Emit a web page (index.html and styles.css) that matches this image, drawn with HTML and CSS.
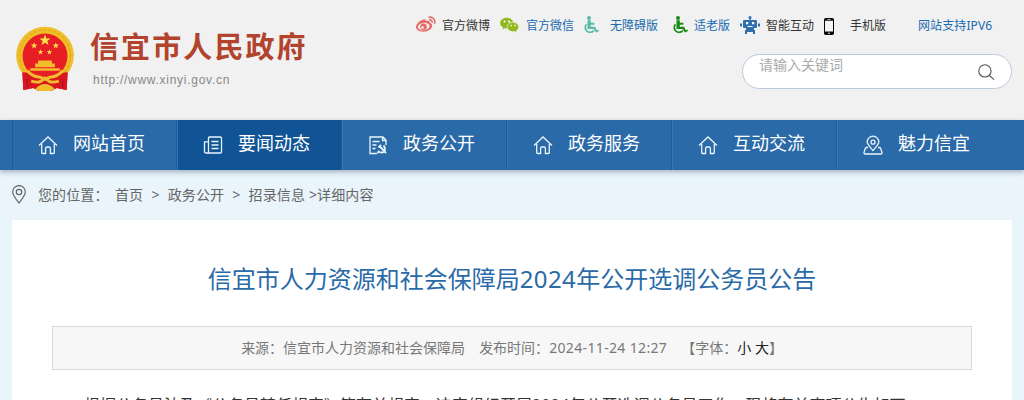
FILE: index.html
```html
<!DOCTYPE html>
<html lang="zh-CN">
<head>
<meta charset="utf-8">
<title>信宜市人民政府</title>
<link rel="stylesheet" href="styles.css">
</head>
<body>
<svg class="defs" width="0" height="0">
  <symbol id="home" viewBox="0 0 20 20"><path d="M1 10.500 10 2l9 8.500M3.700 9v8.600q0 .9.900.9h3v-5.200q0-1.300 1.300-1.300h2.200q1.300 0 1.300 1.300v5.200h3q.9 0 .9-.9V9"/></symbol>
  <symbol id="star" viewBox="-10 -10 20 20"><path d="M0-10 2.400-3.200 9.500-3.100 3.800 1.200 5.900 8.100 0 4-5.900 8.100-3.800 1.200-9.500-3.100-2.400-3.200z"/></symbol>
  <symbol id="wheelchair" viewBox="0 0 16 18"><circle cx="6" cy="2" r="2"/><path d="M4.500 4.300h3.300v2.400h3.600v2H7.800v2h4.300l1.700 3.600 1.600-.7.600 1.500-3 1.500-2.500-3.500h-6z"/><path class="wheel" d="M3.400 8.400a4.500 4.500 0 1 0 7.300 6.200"/></symbol>
</svg>
<header class="header">
  <div class="brand">
    <svg class="emblem" viewBox="0 0 60 66">
      <path fill="#c9151e" d="M7 46 53 46 52 65 42 63 36 66H24L18 63 8 65z"/>
      <circle cx="30" cy="30" r="29.300" fill="#eebd27"/>
      <circle cx="30" cy="30" r="26" fill="none" stroke="#e0a922" stroke-width="1.200" stroke-dasharray="3 2"/>
      <circle cx="30" cy="30.500" r="22.800" fill="#e81e25"/>
      <g fill="#ffe04a"><use href="#star" x="24" y="8.500" width="12" height="12"/><use href="#star" x="15.500" y="16.500" width="7" height="7"/><use href="#star" x="37.500" y="16.500" width="7" height="7"/><use href="#star" x="22.500" y="23.500" width="6" height="6"/><use href="#star" x="31.500" y="23.500" width="6" height="6"/></g>
      <path fill="#f2bd2d" d="M23 35h14v3h3v4H20v-4h3zM15 43h30v2.500H15z"/>
      <path fill="#d9161f" d="M7 47q8 0 11 5h24q3-5 11-5l-1 18-10-2-6 3H24l-6-3-10 2z"/>
      <path fill="none" stroke="#f2bd2d" stroke-width="3" d="M12 45q4 6 13 7l5 2 5-2q9-1 13-7M16 56q7 2 10 0l4-3 4 3q3 2 10 0"/>
      <path fill="#f2bd2d" d="M20 64q5-5 10-5t10 5l-4 2H24z"/>
      <path fill="none" stroke="#9f171d" d="M12 54v9M48 54v9"/>
    </svg>
    <div class="brand-copy">
      <h1 class="brand-name">信宜市人民政府</h1>
      <div class="brand-url">http://www.xinyi.gov.cn</div>
    </div>
  </div>
  <div class="tools">
    <div class="quick">
      <a class="quick-item"><span class="quick-icon"><svg width="20" height="17" viewBox="0 0 20 17"><path fill="#e36b69" d="M7.500 3.500c1.500-.7 2.500 0 2.200 1.600 2.500-.8 4.600-.4 4 1.700 2 .7 3.100 2.200 2.300 4.200-1.200 3-5 4.700-8.800 4.700C3.200 15.700 0 14 0 10.800 0 7.900 4.300 4.200 7.500 3.500z"/><ellipse cx="7.800" cy="10.600" rx="5.800" ry="3.700" fill="#f5eeee" transform="rotate(-8 7.800 10.600)"/><circle cx="7.500" cy="10.800" r="3.300" fill="#e36b69"/><circle cx="6.500" cy="11.500" r="1.200" fill="#fff"/><path fill="none" stroke="#e36b69" stroke-width="1.600" d="M12.500 1.300c4-1 7.300 2 6 6.500M13.200 4c2-.4 3.200.8 2.700 2.700"/></svg></span>官方微博</a>
      <a class="quick-item blue"><span class="quick-icon"><svg width="19" height="16" viewBox="0 0 19 16"><path fill="#91b91f" d="M6.800.8c3.900 0 6.600 2.300 6.600 5.400 0 3.200-3 5.400-6.600 5.400l-2-.3L2.600 12.600l.5-2.200C1.200 9.400.2 8 .2 6.200.2 3.100 3 .8 6.800.8z"/><path fill="#91b91f" stroke="#f1f1f1" stroke-width=".7" d="M13 5.200c3.300 0 5.700 2.100 5.700 4.700 0 1.600-.8 2.700-2 3.600l.4 2-2-1c-4.400.9-7.800-1.400-7.800-4.600 0-2.700 2.500-4.700 5.700-4.700z"/><g fill="#fff"><circle cx="4.500" cy="4.500" r="1"/><circle cx="9" cy="4.500" r="1"/><circle cx="11.200" cy="8.600" r=".8"/><circle cx="15" cy="8.600" r=".8"/></g></svg></span>官方微信</a>
      <a class="quick-item blue wide"><span class="quick-icon teal"><svg width="16" height="18"><use href="#wheelchair"/></svg></span>无障碍版</a>
      <a class="quick-item blue elder"><span class="quick-icon green"><svg width="16" height="18"><use href="#wheelchair"/></svg></span>适老版</a>
      <a class="quick-item"><span class="quick-icon"><svg width="20" height="18" viewBox="0 0 20 18"><path fill="#2f70ad" d="M9.300 2h1.400v2H16q1 0 1 1v6q0 1-1 1h-2v2h1v4h-2v-2H7v2H5v-4h1v-2H4q-1 0-1-1V5q0-1 1-1h5.300zM0 7.500h2v3H0zM18 7.500h2v3h-2z"/><circle cx="10" cy="1.500" r="1.500" fill="#2f70ad"/><path fill="#fff" d="M6 6h2.200v2.200H6zM12 6h2.200v2.200H12zM7.500 10h5v1h-5z"/></svg></span>智能互动</a>
      <a class="quick-item phone"><span class="quick-icon"><svg class="handset" width="10" height="17" viewBox="0 0 10 17"><rect width="10" height="17" rx="1.800" fill="#080808"/><path fill="#f5f5f5" d="M1 2.800h8v10.700H1zM3.500 1.100h3v.6h-3z"/><circle cx="5" cy="15.200" r=".8" fill="#fff"/></svg></span>手机版</a>
      <a class="quick-item blue ipv">网站支持IPV6</a>
    </div>
    <div class="search"><span>请输入关键词</span><svg width="17" height="17" viewBox="0 0 18 18"><circle cx="7.300" cy="7.300" r="6.500"/><path d="m12 12 5 4.500"/></svg></div>
  </div>
</header>
<nav class="nav">
  <a class="nav-item"><svg><use href="#home"/></svg>网站首页</a>
  <a class="nav-item active"><svg viewBox="0 0 20 20"><path d="M6.500 2h10.700q1.300 0 1.300 1.300v13.400q0 1.300-1.300 1.300H3q-1.500 0-1.500-1.500V6.800h4v10q0 1.200-1.200 1.200M5.500 17V3q0-1 1-1M8.500 6.500h7M8.500 10h7M8.500 13.500h7"/></svg>要闻动态</a>
  <a class="nav-item"><svg viewBox="0 0 20 20"><path d="M9 18.500H2V2h13l3 3v5M14.500 2v3.500H18M4.500 6.500h7M4.500 10h4M4.500 13.500h3"/><path d="m10.500 12.500 2.500-2.500M12 11.500l6 6.500M15.500 10.500c3 3 1.500 7-2 7-1 0-2-.5-3-1M9.500 18l2-2" stroke-width="1.900"/></svg>政务公开</a>
  <a class="nav-item"><svg><use href="#home"/></svg>政务服务</a>
  <a class="nav-item"><svg><use href="#home"/></svg>互动交流</a>
  <a class="nav-item"><svg viewBox="0 0 20 20"><path d="M10 15.500C6 11 4.200 9.200 4.200 7a5.800 5.800 0 0 1 11.600 0c0 2.200-1.800 4-5.800 8.500zM5 12.500H3q-1.500 2-2 5.200 0 1.300 1 1.300h16q1 0 1-1.300-.5-3.200-2-5.200h-2"/><circle cx="10" cy="7.200" r="2"/></svg>魅力信宜</a>
</nav>
<div class="crumbs">
  <svg width="14" height="19" viewBox="0 0 14 19"><path d="M7 18C3.500 13.500.7 10 .7 6.900a6.300 6.300 0 0 1 12.600 0C13.300 10 10.500 13.500 7 18z"/><circle cx="7" cy="7" r="2.700"/></svg>
  <span class="where">您的位置：</span><a>首页</a><span class="arrow">&gt;</span><a>政务公开</a><span class="arrow">&gt;</span><a>招录信息</a><span class="last">&gt;详细内容</span>
</div>
<main class="article">
  <h2 class="title">信宜市人力资源和社会保障局<span class="year">2024</span>年公开选调公务员公告</h2>
  <div class="meta"><span>来源：信宜市人力资源和社会保障局</span><span>发布时间：<span class="date">2024-11-24 12:27</span></span><span class="fontsize">【字体：<b>小</b> <b>大</b>】</span></div>
  <p class="body-text">根据公务员法及《公务员转任规定》等有关规定，决定组织开展<span class="number">2024</span>年公开选调公务员工作，现将有关事项公告如下：</p>
</main>
</body>
</html>
```
FILE: styles.css
```css
* { box-sizing: border-box; }
body {
  margin: 0;
  height: 400px;
  overflow: hidden;
  background: #e9f4fb;
  font-family: "Noto Sans", "Noto Sans CJK SC", sans-serif;
  font-size: 14px;
  color: #666;
}
h1, h2, p { margin: 0; }
svg { display: block; flex: none; }
.defs { display: none; }
.header {
  display: flex;
  justify-content: space-between;
  height: 120px;
  padding: 0 12px 0 15px;
  background: #f1f1f1;
}
.brand { display: flex; padding-top: 25px; }
.emblem { width: 60px; height: 65px; margin-top: 1px; }
.brand-copy { padding-left: 15px; }
.brand-name {
  height: 42px;
  font: bold 29px/40px "Noto Sans CJK SC", sans-serif;
  letter-spacing: 2.100px;
  color: #b2432c;
  white-space: nowrap;
}
.brand-url {
  padding: 4px 0 0 3px;
  font: 12px/18px "Liberation Sans", sans-serif;
  letter-spacing: .72px;
  color: #888;
}
.tools { width: 596px; }
.quick { display: flex; height: 50px; font-size: 12px; color: #333; }
.quick-item {
  display: flex;
  align-items: center;
  flex: none;
  width: 84px;
  height: 49px;
  white-space: nowrap;
}
.quick-icon { flex: none; width: 26px; }
.handset { margin-top: 3px; }
.blue { color: #186bb0; }
.wide { width: 89px; }
.elder { width: 67px; }
.elder .quick-icon { width: 21px; }
.phone { width: 94px; }
.ipv { width: 78px; letter-spacing: .1px; }
.teal { fill: #57bda9; stroke: #57bda9; margin-left: -1px; margin-right: 1px; }
.green { fill: #168d12; stroke: #168d12; margin-left: -1px; margin-right: 1px; }
.quick-icon use { stroke-width: 0; }
.wheel { fill: none; stroke-width: 1.7px; }
.search {
  display: flex;
  justify-content: space-between;
  width: 270px;
  height: 35px;
  margin: 4px 0 0 326px;
  padding: 0 16px;
  border: 1px solid #bdc9df;
  border-radius: 18px;
  background: #fff;
  color: #aaa;
  line-height: 20px;
}
.search svg { margin-top: 9px; fill: none; stroke: #555; stroke-width: 1.2; }
.nav {
  display: flex;
  height: 50px;
  padding-left: 12px;
  background: #2a6aa8;
  box-shadow: 0 2px 5px rgba(50, 70, 100, .4);
}
.nav-item {
  display: flex;
  width: 165px;
  padding-left: 26px;
  box-shadow: inset 1px 0 #1f5b98;
  color: #fff;
  font-size: 18px;
  line-height: 46px;
  white-space: nowrap;
}
.nav-item + .nav-item { box-shadow: -1px 0 #1f5b98, inset 1px 0 #3978b3; }
.nav-item svg {
  width: 20px;
  height: 20px;
  margin: 15px 15px 0 0;
  fill: none;
  stroke: #eaf4fb;
  stroke-width: 1.3;
}
.active { background: #105496; }
.crumbs {
  display: flex;
  height: 50px;
  padding-left: 12px;
  line-height: 50px;
  letter-spacing: .1px;
  white-space: nowrap;
}
.crumbs svg { margin: 15px 12px 0 0; fill: none; stroke: #666; stroke-width: 1.2; }
.where { width: 77px; }
.arrow { width: 24.500px; text-align: center; }
.last { padding-left: 4px; }
.article { width: 1000px; height: 180px; margin-left: 12px; padding: 36px 40px 0; overflow: hidden; background: #fff; }
.title {
  height: 70px;
  font-size: 24px;
  font-weight: normal;
  line-height: 45px;
  text-align: center;
  color: #2a6aa8;
}
.year { letter-spacing: .4px; }
.meta {
  display: flex;
  justify-content: center;
  gap: 14px;
  height: 44px;
  border: 1px solid #d9d9d9;
  background: #f7f7f7;
  color: #777;
  line-height: 42px;
  white-space: nowrap;
}
.date { letter-spacing: .35px; }
.meta b { font-weight: normal; color: #222; }
.body-text {
  padding: 19px 0 0;
  color: #333;
  font-size: 16px;
  line-height: 32px;
  text-indent: 32px;
  white-space: nowrap;
}
.number { letter-spacing: .2px; }
```
